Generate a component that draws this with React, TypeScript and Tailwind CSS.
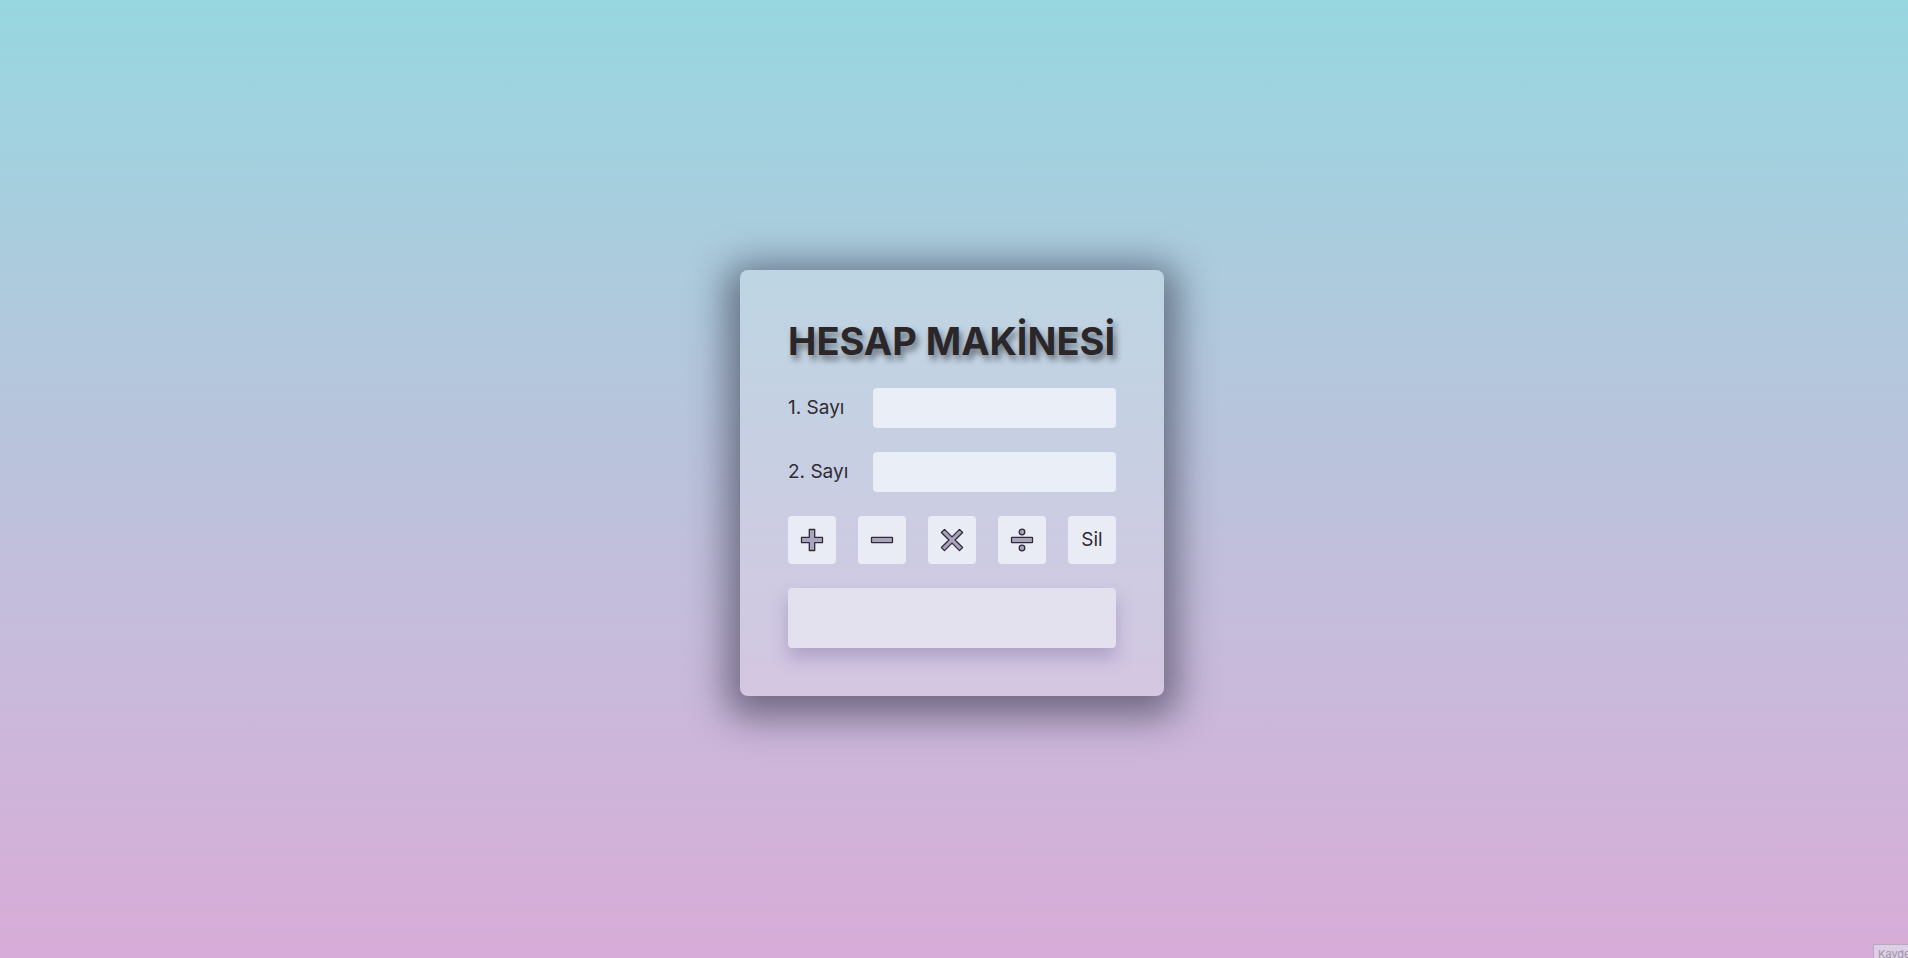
import React from "react";

const font = { fontFamily: "Inter, 'Noto Sans', sans-serif" };

function OpIcon({ kind }: { kind: "plus" | "minus" | "times" | "divide" }) {
  const common = { fill: "#aaa3bf", stroke: "#2f2c33", strokeWidth: 1.3, strokeLinejoin: "round" as const };
  return (
    <svg width="24" height="24" viewBox="0 0 24 24">
      {kind === "plus" && (
        <path d="M9.3 1.5h5.4v7.8h7.8v5.4h-7.8v7.8h-5.4v-7.8h-7.8v-5.4h7.8z" {...common} />
      )}
      {kind === "minus" && <rect x="1.5" y="9.3" width="21" height="5.4" rx="0.5" {...common} />}
      {kind === "times" && (
        <path d="M4.5 1.4L12 8.9l7.5-7.5 3.1 3.1-7.5 7.5 7.5 7.5-3.1 3.1-7.5-7.5-7.5 7.5-3.1-3.1 7.5-7.5-7.5-7.5z" {...common} />
      )}
      {kind === "divide" && (
        <g {...common}>
          <circle cx="12" cy="4" r="2.8" />
          <rect x="1.5" y="9.3" width="21" height="5.4" rx="0.5" />
          <circle cx="12" cy="20" r="2.8" />
        </g>
      )}
    </svg>
  );
}

export default function App() {
  const ops: ("plus" | "minus" | "times" | "divide")[] = ["plus", "minus", "times", "divide"];

  return (
    <div
      className="relative flex min-h-[958px] w-full items-center justify-center overflow-hidden bg-gradient-to-b from-[#96d7e0] to-[#d8acd8]"
      style={font}
    >
      <div className="-ml-1 mt-2 w-[424px] rounded-lg bg-white/20 px-12 pb-12 pt-[52px] shadow-[0_8px_36px_14px_rgba(30,30,50,0.5)]">
        <h1 className="mb-7 whitespace-nowrap text-[38px] font-bold leading-none text-[#2a2629] [text-shadow:3px_5px_6px_rgba(0,0,0,0.45)]">
          HESAP MAKİNESİ
        </h1>

        <div className="flex flex-col gap-6">
          <div className="flex items-center">
            <label className="w-[85px] shrink-0 whitespace-nowrap text-[19px] text-[#2e2c33]">1. Sayı</label>
            <input className="h-10 w-0 min-w-0 flex-1 rounded bg-[#eaeef6] px-3 text-lg outline-none" />
          </div>
          <div className="flex items-center">
            <label className="w-[85px] shrink-0 whitespace-nowrap text-[19px] text-[#2e2c33]">2. Sayı</label>
            <input className="h-10 w-0 min-w-0 flex-1 rounded bg-[#eaeef6] px-3 text-lg outline-none" />
          </div>

          <div className="flex justify-between">
            {ops.map((op) => (
              <button key={op} className="flex h-12 w-12 items-center justify-center rounded bg-[#eaecf5]">
                <OpIcon kind={op} />
              </button>
            ))}
            <button className="flex h-12 w-12 items-center justify-center rounded bg-[#eaecf5] text-[19px] text-[#2e2c33]">
              Sil
            </button>
          </div>

          <div className="h-[60px] rounded bg-[#e3e1ee] shadow-[0_10px_18px_rgba(110,90,150,0.35)]"></div>
        </div>
      </div>

      <div className="absolute left-[1873px] top-[944px] h-[20px] w-[60px] border border-[#b9a8c4] bg-[#dccfe6] px-1 text-[11px] leading-[18px] text-[#a095a8]">
        Kaydet
      </div>
    </div>
  );
}
